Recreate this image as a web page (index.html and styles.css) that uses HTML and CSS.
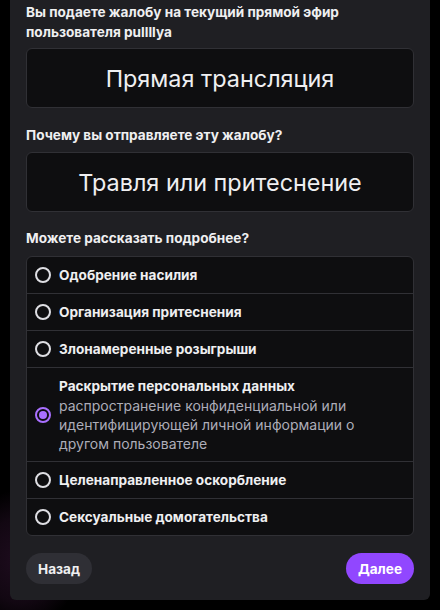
FILE: index.html
```html
<!DOCTYPE html>
<html lang="ru">
<head>
<meta charset="utf-8">
<link rel="stylesheet" href="styles.css">
</head>
<body>
<div class="panel">
  <p class="label intro">Вы подаете жалобу на текущий прямой эфир пользователя pullllya</p>
  <div class="card">Прямая трансляция</div>
  <p class="label q1">Почему вы отправляете эту жалобу?</p>
  <div class="card">Травля или притеснение</div>
  <p class="label q2">Можете рассказать подробнее?</p>
  <ul class="options">
    <li class="option"><span class="radio"></span><div class="otext"><div class="otitle">Одобрение насилия</div></div></li>
    <li class="option"><span class="radio"></span><div class="otext"><div class="otitle">Организация притеснения</div></div></li>
    <li class="option"><span class="radio"></span><div class="otext"><div class="otitle">Злонамеренные розыгрыши</div></div></li>
    <li class="option selected"><span class="radio"></span><div class="otext"><div class="otitle">Раскрытие персональных данных</div><div class="odesc">распространение конфиденциальной или идентифицирующей личной информации о другом пользователе</div></div></li>
    <li class="option"><span class="radio"></span><div class="otext"><div class="otitle">Целенаправленное оскорбление</div></div></li>
    <li class="option"><span class="radio"></span><div class="otext"><div class="otitle">Сексуальные домогательства</div></div></li>
  </ul>
  <div class="actions">
    <button class="btn back">Назад</button>
    <button class="btn next">Далее</button>
  </div>
</div>
</body>
</html>
```
FILE: styles.css
```css
* { box-sizing: border-box; }
html, body { margin: 0; padding: 0; }
body {
  width: 440px;
  height: 610px;
  overflow: hidden;
  background:
    radial-gradient(ellipse 60px 70px at 20px 560px, #1e0c1e 0%, rgba(30,12,30,0.6) 60%, rgba(0,0,0,0) 100%),
    #000;
  font-family: Inter, "Noto Sans", sans-serif;
  color: #efeff1;
}
.panel {
  margin-left: 10px;
  width: 420px;
  background: #1f1f23;
  border-radius: 0 0 6px 6px;
  padding: 2px 16px 16px 16px;
  display: flex;
  flex-direction: column;
}
.label {
  margin: 0;
  font-size: 13.6px;
  font-weight: 700;
  line-height: 20px;
  color: #efeff1;
}
.intro { margin-bottom: 6px; padding-right: 60px; }
.q1 { margin-top: 17px; margin-bottom: 7px; }
.q2 { margin-top: 16px; margin-bottom: 8px; }
.card {
  height: 60px;
  background: #0e0e10;
  border: 1px solid #303035;
  border-radius: 6px;
  display: flex;
  align-items: center;
  justify-content: center;
  font-size: 23.4px;
  font-weight: 400;
  color: #efeff1;
}
.options {
  list-style: none;
  margin: 0;
  padding: 0;
  background: #0e0e10;
  border: 1px solid #303035;
  border-radius: 6px;
}
.option {
  display: flex;
  align-items: center;
  gap: 8px;
  padding: 8px 8px 8px 8px;
}
.option + .option { border-top: 1px solid #303035; }
.radio {
  flex: none;
  width: 16px;
  height: 16px;
  border: 2px solid #dedee3;
  border-radius: 50%;
  display: flex;
  align-items: center;
  justify-content: center;
}
.selected .radio { border-color: #a970ff; }
.selected .radio::after {
  content: "";
  width: 8px;
  height: 8px;
  border-radius: 50%;
  background: #a970ff;
}
.option.selected { padding-top: 8px; padding-bottom: 8px; }
.otitle {
  font-size: 13.6px;
  font-weight: 700;
  line-height: 20px;
  color: #efeff1;
}
.odesc {
  font-size: 14px;
  line-height: 19px;
  color: #adadb8;
  padding-right: 20px;
}
.actions {
  display: flex;
  justify-content: space-between;
  margin-top: 17px;
}
.btn {
  border: none;
  height: 31px;
  padding: 0 12px;
  border-radius: 16px;
  font-family: Inter, "Noto Sans", sans-serif;
  font-size: 13.6px;
  font-weight: 700;
  color: #efeff1;
}
.back { background: #2f2f35; }
.next { background: #9147ff; color: #fff; }
```
